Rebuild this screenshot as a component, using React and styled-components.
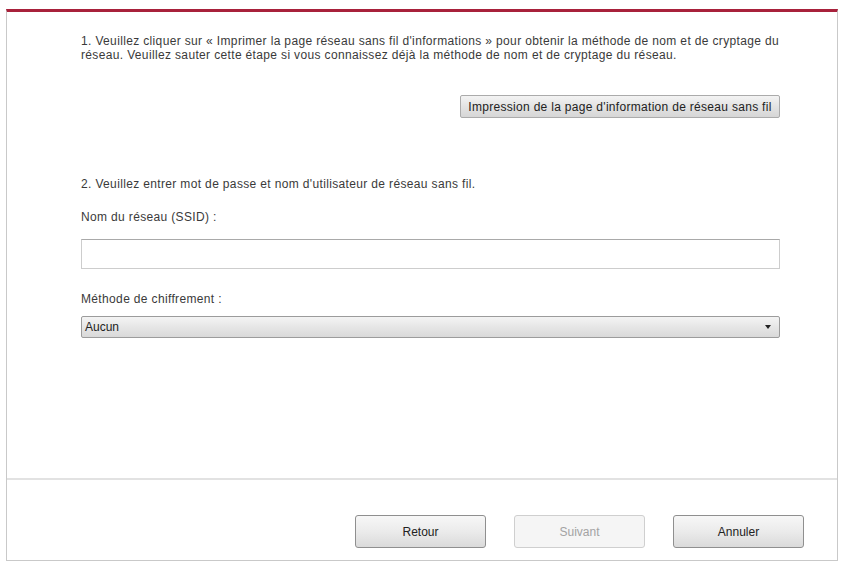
import styled, { createGlobalStyle } from "styled-components";

const GlobalStyle = createGlobalStyle`
  html, body {
    margin: 0;
    padding: 0;
    background: #ffffff;
  }
  body {
    font-family: "Liberation Sans", Tahoma, sans-serif;
    color: #2b2b2b;
  }
`;

const Page = styled.div`
  width: 843px;
  height: 565px;
  padding: 9px 5px 0 6px;
  box-sizing: border-box;
`;

const Frame = styled.div`
  height: 552px;
  box-sizing: border-box;
  border: 1px solid #c9c9c9;
  border-top: 3px solid #a8213b;
  display: flex;
  flex-direction: column;
  background: #fff;
`;

const Content = styled.div`
  flex: 1;
  padding: 22px 57px 0 74px;
  display: flex;
  flex-direction: column;
`;

const Text = styled.p`
  margin: ${(p) => p.$mt || 0}px 0 0;
  font-size: 12px;
  letter-spacing: 0.35px;
  line-height: 14px;
  white-space: nowrap;
  color: #3a3a3a;
`;

const PrintRow = styled.div`
  display: flex;
  justify-content: flex-end;
  margin-top: 33px;
`;

const PrintButton = styled.button`
  width: 320px;
  height: 23px;
  padding: 0;
  border: 1px solid #ababab;
  border-radius: 2px;
  background: linear-gradient(#f3f3f3, #e3e3e3 50%, #d6d6d6);
  font-family: inherit;
  font-size: 12px;
  letter-spacing: 0.3px;
  color: #222;
`;

const TextField = styled.div`
  height: 30px;
  margin-top: 15px;
  box-sizing: border-box;
  border: 1px solid #cdcdcd;
  border-top-color: #a9a9a9;
  background: #fff;
`;

const Select = styled.div`
  height: 22px;
  margin-top: 10px;
  box-sizing: border-box;
  border: 1px solid #9c9c9c;
  border-radius: 2px;
  background: linear-gradient(#f4f4f4, #e6e6e6 50%, #d9d9d9);
  display: flex;
  align-items: center;
  justify-content: space-between;
  padding: 0 8px 0 3px;
  font-size: 12px;
  color: #222;
`;

const Arrow = styled.span`
  width: 0;
  height: 0;
  border-left: 3.5px solid transparent;
  border-right: 3.5px solid transparent;
  border-top: 4px solid #222;
`;

const Footer = styled.div`
  height: 82px;
  box-sizing: border-box;
  border-top: 2px solid #e2e2e2;
  display: flex;
  justify-content: flex-end;
  align-items: flex-start;
  gap: 28px;
  padding: 35px 33px 0 0;
`;

const DialogButton = styled.button`
  width: 131px;
  height: 33px;
  padding: 0;
  border: 1px solid ${(p) => (p.disabled ? "#cfcfcf" : "#8f8f8f")};
  border-radius: 3px;
  background: ${(p) =>
    p.disabled
      ? "#f5f5f5"
      : "linear-gradient(#f7f7f7, #ebebeb 50%, #dadada)"};
  font-family: inherit;
  font-size: 12px;
  color: ${(p) => (p.disabled ? "#a3a3a3" : "#222")};
`;

export default function App() {
  return (
    <>
      <GlobalStyle />
      <Page>
        <Frame>
          <Content>
            <Text>
              1. Veuillez cliquer sur « Imprimer la page réseau sans fil d'informations » pour obtenir la méthode de nom et de cryptage du
              <br />
              réseau. Veuillez sauter cette étape si vous connaissez déjà la méthode de nom et de cryptage du réseau.
            </Text>
            <PrintRow>
              <PrintButton>Impression de la page d'information de réseau sans fil</PrintButton>
            </PrintRow>
            <Text $mt={59}>2. Veuillez entrer mot de passe et nom d'utilisateur de réseau sans fil.</Text>
            <Text $mt={19}>Nom du réseau (SSID) :</Text>
            <TextField />
            <Text $mt={23}>Méthode de chiffrement :</Text>
            <Select>
              Aucun
              <Arrow />
            </Select>
          </Content>
          <Footer>
            <DialogButton>Retour</DialogButton>
            <DialogButton disabled>Suivant</DialogButton>
            <DialogButton>Annuler</DialogButton>
          </Footer>
        </Frame>
      </Page>
    </>
  );
}
